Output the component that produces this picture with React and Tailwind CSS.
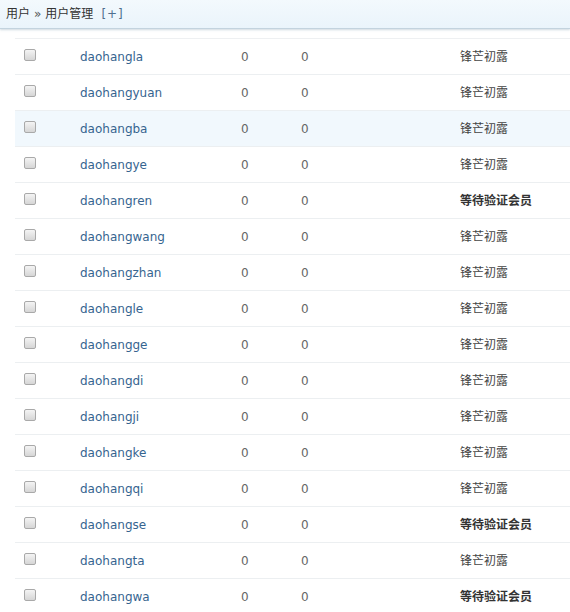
import React from "react";

const rows = [
  ["daohangla", "锋芒初露"],
  ["daohangyuan", "锋芒初露"],
  ["daohangba", "锋芒初露", true],
  ["daohangye", "锋芒初露"],
  ["daohangren", "等待验证会员"],
  ["daohangwang", "锋芒初露"],
  ["daohangzhan", "锋芒初露"],
  ["daohangle", "锋芒初露"],
  ["daohangge", "锋芒初露"],
  ["daohangdi", "锋芒初露"],
  ["daohangji", "锋芒初露"],
  ["daohangke", "锋芒初露"],
  ["daohangqi", "锋芒初露"],
  ["daohangse", "等待验证会员"],
  ["daohangta", "锋芒初露"],
  ["daohangwa", "等待验证会员"],
];

function Checkbox() {
  return (
    <span className="block w-3 h-3 rounded-[2px] border border-[#a9a9a9] bg-gradient-to-b from-[#f4f4f4] to-[#d6d6d6]" />
  );
}

export default function App() {
  return (
    <div className="w-[570px] h-[612px] overflow-hidden bg-white text-[12px] text-[#333] font-['DejaVu_Sans','Noto_Sans_CJK_SC',sans-serif]">
      <div className="h-[29px] flex items-center px-[6px] bg-gradient-to-b from-[#f3f9fd] to-[#eaf4fb] border-b border-[#c3d3de] shadow-[0_1px_2px_rgba(160,180,195,0.5)]">
        <span>用户</span>
        <span className="mx-[4px] text-[#555]">»</span>
        <span>用户管理</span>
        <span className="ml-[8px] text-[#4f6f8f] tracking-[1px]">[+]</span>
      </div>
      <div className="pl-[15px] pt-[9px]">
        <div className="border-t border-[#eef0f2]">
          {rows.map(([name, status, hover]) => (
            <div
              key={name}
              className={`h-[36px] flex items-center border-b border-[#eceff1] ${hover ? "bg-[#f1f8fd]" : ""}`}
            >
              <div className="w-[65px] pl-[9px] -mt-[4px]">
                <Checkbox />
              </div>
              <div className="w-[161px] text-[#36648f]">{name}</div>
              <div className="w-[60px] text-[#666]">0</div>
              <div className="w-[159px] text-[#666]">0</div>
              <div className={status === "锋芒初露" ? "text-[#444]" : "font-bold text-[#333]"}>
                {status}
              </div>
            </div>
          ))}
        </div>
      </div>
    </div>
  );
}
